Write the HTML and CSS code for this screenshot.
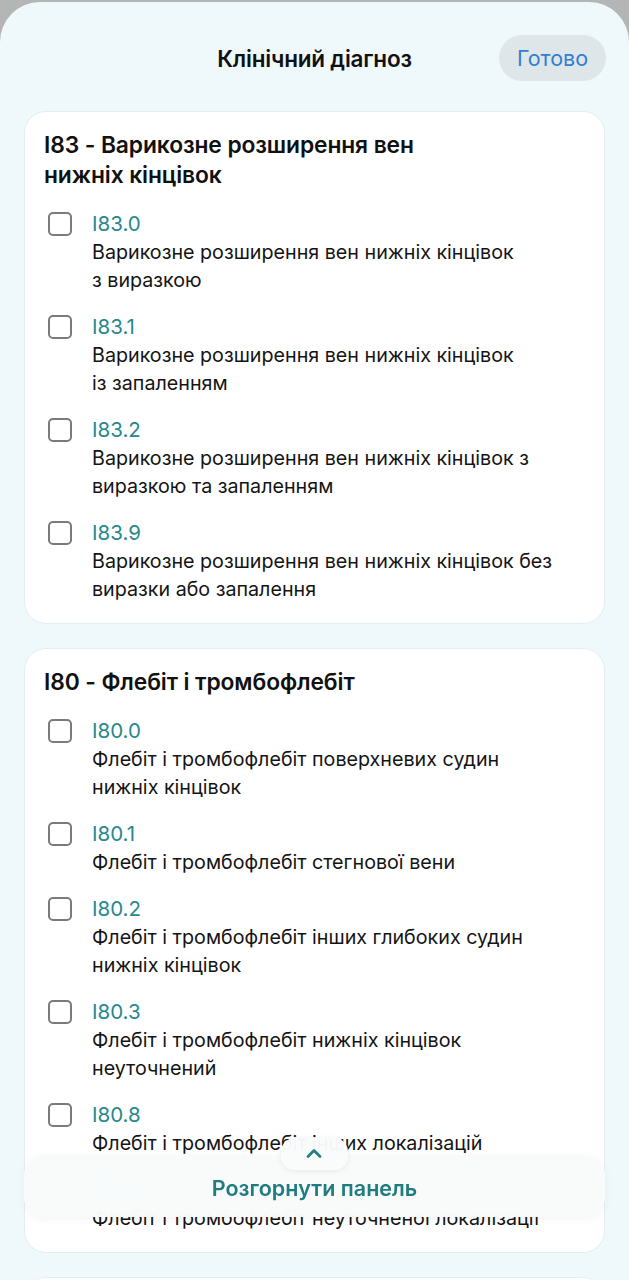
FILE: index.html
```html
<!DOCTYPE html>
<html lang="uk">
<head>
<meta charset="utf-8">
<title>Клінічний діагноз</title>
<link rel="stylesheet" href="styles.css">
</head>
<body>
<div class="sheet">
  <header class="header">
    <h1 class="header-title">Клінічний діагноз</h1>
    <button class="done-btn">Готово</button>
  </header>

  <section class="card">
    <h2 class="card-title">I83 - Варикозне розширення вен<br>нижніх кінцівок</h2>
    <ul class="items">
      <li class="item"><span class="checkbox"></span><div class="item-text"><div class="code">I83.0</div><div class="desc">Варикозне розширення вен нижніх кінцівок<br>з виразкою</div></div></li>
      <li class="item"><span class="checkbox"></span><div class="item-text"><div class="code">I83.1</div><div class="desc">Варикозне розширення вен нижніх кінцівок<br>із запаленням</div></div></li>
      <li class="item"><span class="checkbox"></span><div class="item-text"><div class="code">I83.2</div><div class="desc">Варикозне розширення вен нижніх кінцівок з<br>виразкою та запаленням</div></div></li>
      <li class="item"><span class="checkbox"></span><div class="item-text"><div class="code">I83.9</div><div class="desc">Варикозне розширення вен нижніх кінцівок без<br>виразки або запалення</div></div></li>
    </ul>
  </section>

  <section class="card">
    <h2 class="card-title">I80 - Флебіт і тромбофлебіт</h2>
    <ul class="items">
      <li class="item"><span class="checkbox"></span><div class="item-text"><div class="code">I80.0</div><div class="desc">Флебіт і тромбофлебіт поверхневих судин<br>нижніх кінцівок</div></div></li>
      <li class="item"><span class="checkbox"></span><div class="item-text"><div class="code">I80.1</div><div class="desc">Флебіт і тромбофлебіт стегнової вени</div></div></li>
      <li class="item"><span class="checkbox"></span><div class="item-text"><div class="code">I80.2</div><div class="desc">Флебіт і тромбофлебіт інших глибоких судин<br>нижніх кінцівок</div></div></li>
      <li class="item"><span class="checkbox"></span><div class="item-text"><div class="code">I80.3</div><div class="desc">Флебіт і тромбофлебіт нижніх кінцівок<br>неуточнений</div></div></li>
      <li class="item"><span class="checkbox"></span><div class="item-text"><div class="code">I80.8</div><div class="desc">Флебіт і тромбофлебіт інших локалізацій</div></div></li>
      <li class="item"><span class="checkbox"></span><div class="item-text"><div class="code">I80.9</div><div class="desc">Флебіт і тромбофлебіт неуточненої локалізації</div></div></li>
    </ul>
  </section>

  <section class="card card-empty"></section>
</div>

<div class="panel">
  <div class="panel-tab">
    <svg width="22" height="12" viewBox="0 0 22 12"><path d="M5 9.5 L11 3.5 L17 9.5" fill="none" stroke="#1f7f83" stroke-width="2.8" stroke-linecap="round" stroke-linejoin="round"/></svg>
  </div>
  <div class="panel-label">Розгорнути панель</div>
</div>
</body>
</html>
```

FILE: styles.css
```css
* { box-sizing: border-box; }
html, body { margin: 0; padding: 0; }
body {
  background: #b4b6b6;
  font-family: "Inter", "Noto Sans", "Liberation Sans", sans-serif;
  color: #111;
  overflow: hidden;
  height: 1280px;
}
.sheet {
  margin-top: 2px;
  background: #eff8fb;
  border-radius: 40px 40px 0 0;
  padding: 33px 24px 40px;
  min-height: 1300px;
}
.header {
  display: flex;
  align-items: center;
  justify-content: center;
  position: relative;
  height: 46px;
}
.header-title {
  margin: 0;
  font-size: 22.5px;
  font-weight: 600;
  letter-spacing: -0.2px;
}
.done-btn {
  position: absolute;
  right: -1px;
  top: 0;
  height: 46px;
  width: 107px;
  border: none;
  border-radius: 23px;
  background: #dfe6e9;
  color: #2f80cf;
  font-family: inherit;
  font-size: 21.5px;
  font-weight: 400;
}
.card {
  margin-top: 30px;
  background: #fff;
  border: 1px solid #e4eef1;
  border-radius: 22px;
  padding: 18px 20px 20px 19px;
}
.card + .card { margin-top: 24px; }
.card-empty { height: 120px; }
.card-title {
  margin: 0;
  font-size: 22.8px;
  line-height: 30px;
  font-weight: 600;
  letter-spacing: -0.1px;
}
.items {
  list-style: none;
  margin: 20px 0 0;
  padding: 0 0 0 4px;
  display: flex;
  flex-direction: column;
  gap: 19px;
}
.item {
  display: flex;
  gap: 20px;
  align-items: flex-start;
}
.checkbox {
  flex: none;
  width: 24px;
  height: 24px;
  margin-top: 2px;
  border: 2px solid #7b7b7b;
  border-radius: 5px;
}
.code {
  color: #27898d;
  font-size: 20.5px;
  line-height: 28px;
}
.desc {
  font-size: 19.7px;
  line-height: 28px;
  color: #141414;
}
.panel {
  position: fixed;
  left: 24px;
  right: 24px;
  bottom: 63px;
  height: 62px;
  border-radius: 20px;
  background: rgba(249, 251, 251, 0.97);
  backdrop-filter: blur(8px);
  box-shadow: 0 2px 10px rgba(0, 0, 0, 0.05);
  display: flex;
  align-items: center;
  justify-content: center;
}
.panel-tab {
  position: absolute;
  top: -17px;
  left: 50%;
  margin-left: -34px;
  width: 67px;
  height: 32px;
  border-radius: 14px;
  background: rgba(250, 252, 252, 0.97);
  box-shadow: 0 1px 6px rgba(0, 0, 0, 0.08);
  display: flex;
  align-items: flex-start;
  justify-content: center;
  padding-top: 9px;
}
.panel-label {
  color: #1f7c80;
  font-size: 21.5px;
  font-weight: 600;
  margin-top: 4px;
}
```
